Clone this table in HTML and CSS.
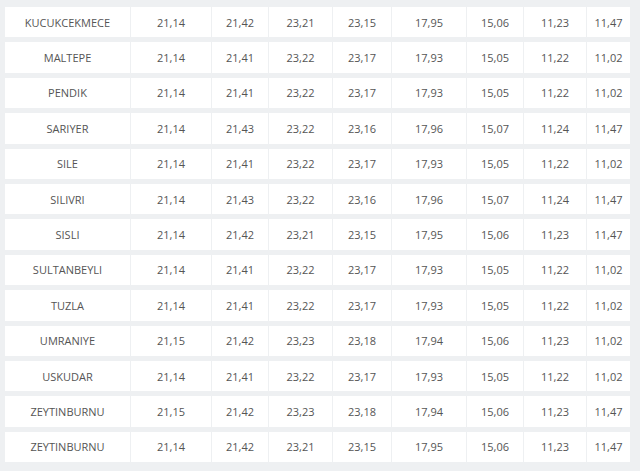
FILE: index.html
```html
<!DOCTYPE html>
<html lang="tr">
<head>
<meta charset="utf-8">
<title>Akaryakıt Fiyatları</title>
<link rel="stylesheet" href="styles.css">
</head>
<body>
<div class="table">
  <div class="cell name">KUCUKCEKMECE</div><div class="cell">21,14</div><div class="cell">21,42</div><div class="cell">23,21</div><div class="cell">23,15</div><div class="cell">17,95</div><div class="cell">15,06</div><div class="cell">11,23</div><div class="cell">11,47</div>
  <div class="cell name">MALTEPE</div><div class="cell">21,14</div><div class="cell">21,41</div><div class="cell">23,22</div><div class="cell">23,17</div><div class="cell">17,93</div><div class="cell">15,05</div><div class="cell">11,22</div><div class="cell">11,02</div>
  <div class="cell name">PENDIK</div><div class="cell">21,14</div><div class="cell">21,41</div><div class="cell">23,22</div><div class="cell">23,17</div><div class="cell">17,93</div><div class="cell">15,05</div><div class="cell">11,22</div><div class="cell">11,02</div>
  <div class="cell name">SARIYER</div><div class="cell">21,14</div><div class="cell">21,43</div><div class="cell">23,22</div><div class="cell">23,16</div><div class="cell">17,96</div><div class="cell">15,07</div><div class="cell">11,24</div><div class="cell">11,47</div>
  <div class="cell name">SILE</div><div class="cell">21,14</div><div class="cell">21,41</div><div class="cell">23,22</div><div class="cell">23,17</div><div class="cell">17,93</div><div class="cell">15,05</div><div class="cell">11,22</div><div class="cell">11,02</div>
  <div class="cell name">SILIVRI</div><div class="cell">21,14</div><div class="cell">21,43</div><div class="cell">23,22</div><div class="cell">23,16</div><div class="cell">17,96</div><div class="cell">15,07</div><div class="cell">11,24</div><div class="cell">11,47</div>
  <div class="cell name">SISLI</div><div class="cell">21,14</div><div class="cell">21,42</div><div class="cell">23,21</div><div class="cell">23,15</div><div class="cell">17,95</div><div class="cell">15,06</div><div class="cell">11,23</div><div class="cell">11,47</div>
  <div class="cell name">SULTANBEYLI</div><div class="cell">21,14</div><div class="cell">21,41</div><div class="cell">23,22</div><div class="cell">23,17</div><div class="cell">17,93</div><div class="cell">15,05</div><div class="cell">11,22</div><div class="cell">11,02</div>
  <div class="cell name">TUZLA</div><div class="cell">21,14</div><div class="cell">21,41</div><div class="cell">23,22</div><div class="cell">23,17</div><div class="cell">17,93</div><div class="cell">15,05</div><div class="cell">11,22</div><div class="cell">11,02</div>
  <div class="cell name">UMRANIYE</div><div class="cell">21,15</div><div class="cell">21,42</div><div class="cell">23,23</div><div class="cell">23,18</div><div class="cell">17,94</div><div class="cell">15,06</div><div class="cell">11,23</div><div class="cell">11,02</div>
  <div class="cell name">USKUDAR</div><div class="cell">21,14</div><div class="cell">21,41</div><div class="cell">23,22</div><div class="cell">23,17</div><div class="cell">17,93</div><div class="cell">15,05</div><div class="cell">11,22</div><div class="cell">11,02</div>
  <div class="cell name">ZEYTINBURNU</div><div class="cell">21,15</div><div class="cell">21,42</div><div class="cell">23,23</div><div class="cell">23,18</div><div class="cell">17,94</div><div class="cell">15,06</div><div class="cell">11,23</div><div class="cell">11,47</div>
  <div class="cell name">ZEYTINBURNU</div><div class="cell">21,14</div><div class="cell">21,42</div><div class="cell">23,21</div><div class="cell">23,15</div><div class="cell">17,95</div><div class="cell">15,06</div><div class="cell">11,23</div><div class="cell">11,47</div>
</div>
</body>
</html>
```
FILE: styles.css
```css
html, body {
  margin: 0;
  padding: 0;
  background: #eef0f2;
}
body {
  padding: 7px 10px 0 5px;
  font-family: "Open Sans", "Liberation Sans", sans-serif;
  font-size: 11px;
  color: #555555;
  overflow: hidden;
}
.table {
  display: grid;
  grid-template-columns: 125px 80px 56px 63px 58px 74px 56px 62px 43px;
  grid-auto-rows: 30.4px;
  column-gap: 1px;
  row-gap: 5px;
}
.cell {
  background: #ffffff;
  display: flex;
  align-items: center;
  justify-content: center;
  white-space: nowrap;
}
```
